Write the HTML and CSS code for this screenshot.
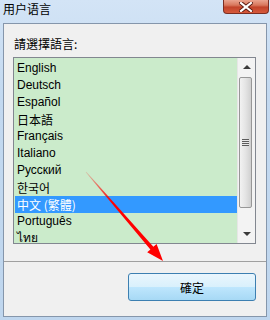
FILE: index.html
```html
<!DOCTYPE html>
<html lang="zh">
<head>
    <meta charset="UTF-8">
    <title>用户语言</title>
    <link rel="stylesheet" href="styles.css">
</head>
<body>
    <div class="window">
        <div class="titlebar">
            <span class="title">用户语言</span>
            <div class="close">
                <svg width="14" height="10" viewBox="0 0 14 10">
                    <path d="M2 1 L12 9 M12 1 L2 9" stroke="#5a1a10" stroke-width="4" stroke-linecap="square"/>
                    <path d="M2 1 L12 9 M12 1 L2 9" stroke="#ffffff" stroke-width="2.2" stroke-linecap="square"/>
                </svg>
            </div>
        </div>

        <div class="client">
            <div class="top">
                <div class="label">請選擇語言:</div>
                <div class="listbox">
                    <ul class="items">
                        <li>English</li>
                        <li>Deutsch</li>
                        <li>Español</li>
                        <li class="cjk">日本語</li>
                        <li>Français</li>
                        <li>Italiano</li>
                        <li>Русский</li>
                        <li class="cjk">한국어</li>
                        <li class="cjk selected">中文 (繁體)</li>
                        <li>Português</li>
                        <li>ไทย</li>
                    </ul>
                    <div class="scrollbar">
                        <div class="arrow up"></div>
                        <div class="track">
                            <div class="thumb">
                                <span class="grip"></span>
                            </div>
                        </div>
                        <div class="arrow down"></div>
                    </div>
                </div>
            </div>

            <!-- Footer with OK button -->
            <div class="footer">
                <button class="ok">確定</button>
            </div>
        </div>

        <!-- Red annotation arrow -->
        <svg class="pointer" width="270" height="320" viewBox="0 0 270 320">
            <defs>
                <linearGradient id="fade" x1="86" y1="172" x2="163" y2="261" gradientUnits="userSpaceOnUse">
                    <stop offset="0" stop-color="#ff0000" stop-opacity="0.15"/>
                    <stop offset="0.35" stop-color="#ff0000"/>
                    <stop offset="1" stop-color="#ff0000"/>
                </linearGradient>
            </defs>
            <polygon fill="url(#fade)" points="85.7,172.3 86.3,171.7 153.4,246.8 156.6,244 163,261 147.2,252.2 150.4,249.4"/>
        </svg>
    </div>
</body>
</html>
```

FILE: styles.css
```css
body {
    margin: 0;
    background: #ffffff;
}

.window {
    position: relative;
    width: 270px;
    height: 320px;
    display: flex;
    flex-direction: column;
    background: linear-gradient(#d3e4f6, #c3d9f0 30%, #bfd6ee);
    overflow: hidden;
}

.titlebar {
    height: 23px;
    display: flex;
    justify-content: space-between;
    align-items: flex-start;
    padding-left: 3px;
}

.title {
    font-family: "Noto Sans CJK SC", sans-serif;
    font-size: 12px;
    line-height: 16px;
    margin-top: 1px;
    color: #000;
}

.close {
    width: 46px;
    height: 14px;
    margin-right: 1px;
    box-sizing: border-box;
    border: 1px solid #7b2e22;
    border-top: none;
    border-radius: 0 0 4px 4px;
    background: linear-gradient(#eaa48f, #d8775c 40%, #c2442a 55%, #d65a3c);
    display: flex;
    justify-content: center;
    align-items: center;
}

.client {
    height: 294px;
    margin: 0 3px;
    box-sizing: border-box;
    border: 1px solid #8596ab;
    background: #f0f0f0;
    display: flex;
    flex-direction: column;
}

.top {
    padding: 12px 10px 0 9px;
    height: 238px;
    box-sizing: border-box;
    border-bottom: 1px solid #a0a0a0;
}

.label {
    font-family: "Noto Sans CJK TC", sans-serif;
    font-size: 12px;
    line-height: 15px;
    padding-left: 1px;
    color: #000;
}

.listbox {
    margin-top: 6px;
    height: 187px;
    box-sizing: border-box;
    border: 1px solid #828790;
    background: #cbebcb;
    display: flex;
}

.items {
    flex: 1;
    list-style: none;
    margin: 0;
    padding: 2px 0 0 1px;
    overflow: hidden;
}

.items li {
    height: 17px;
    line-height: 17px;
    padding-left: 2px;
    font-family: "Liberation Sans", "Noto Sans CJK TC", sans-serif;
    font-size: 12px;
    color: #000;
    white-space: nowrap;
}

.items li.cjk {
    font-family: "Noto Sans CJK TC", "Noto Sans CJK KR", sans-serif;
}

.items li.selected {
    background: #3399ff;
    color: #fff;
}

.scrollbar {
    width: 17px;
    display: flex;
    flex-direction: column;
    background: #f3f3f3;
    border-left: 1px solid #e6e6e6;
}

.arrow {
    height: 18px;
    display: flex;
    justify-content: center;
    align-items: center;
}

.arrow::before {
    content: '';
    border-left: 4px solid transparent;
    border-right: 4px solid transparent;
}

.arrow.up::before {
    border-bottom: 4px solid #3b3b3b;
}

.arrow.down::before {
    border-top: 4px solid #3b3b3b;
}

.track {
    flex: 1;
    padding: 1px 0 0 1px;
}

.thumb {
    width: 13px;
    height: 131px;
    box-sizing: border-box;
    border: 1px solid #979797;
    border-radius: 2px;
    background: linear-gradient(90deg, #f2f2f2, #e4e4e4 50%, #d0d0d0);
    display: flex;
    justify-content: center;
    align-items: center;
}

.grip {
    width: 7px;
    height: 7px;
    background: repeating-linear-gradient(#5c5c5c 0 1px, #e8e8e8 1px 2px);
}

.footer {
    flex: 1;
    display: flex;
    justify-content: flex-end;
    align-items: flex-start;
    padding: 11px 10px 0 0;
}

.ok {
    width: 128px;
    height: 28px;
    margin: 0;
    box-sizing: border-box;
    border: 1px solid #3c7fb1;
    border-radius: 3px;
    background: linear-gradient(#eaf6fd, #d9f0fc 50%, #bee6fd 51%, #a7d9f5);
    font-family: "Noto Sans CJK TC", sans-serif;
    font-size: 12px;
    color: #000;
    padding: 0;
}

.pointer {
    position: absolute;
    left: 0;
    top: 0;
    pointer-events: none;
}
```
